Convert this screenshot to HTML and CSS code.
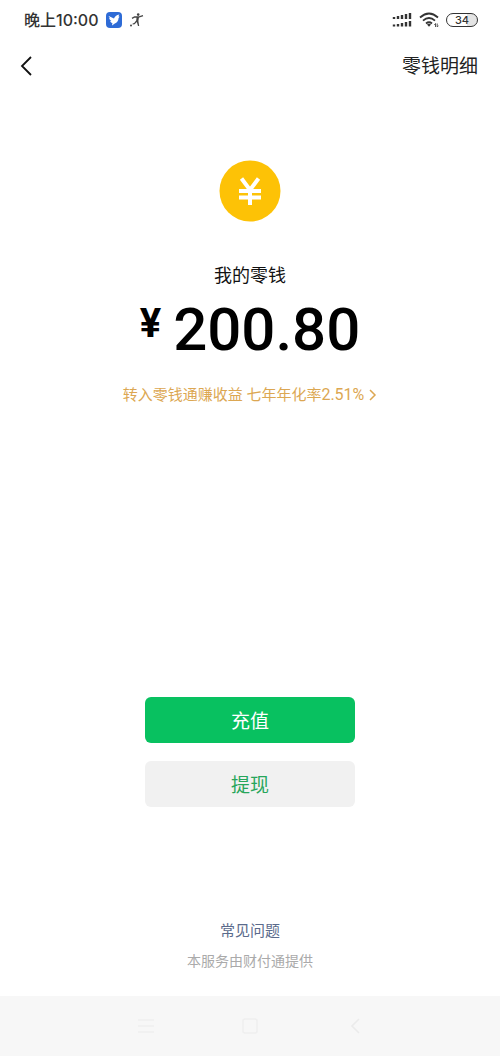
FILE: index.html
```html
<!DOCTYPE html>
<html lang="zh-CN">
<head>
<meta charset="utf-8">
<meta name="viewport" content="width=device-width, initial-scale=1">
<title>我的零钱</title>
<link rel="stylesheet" href="styles.css">
</head>
<body>
<div class="screen">
  <div class="status">
    <span class="clock">晚上10:00</span>
    <svg class="app-icon" width="16" height="16" viewBox="0 0 16 16" aria-hidden="true"><rect width="16" height="16" rx="4" fill="#2e6bd6"/><path d="M2.6 4 8 6.6C8.6 4.8 10.4 3 13.4 2.6L12.4 4.2 13.6 4.8 12.6 6C12.4 9 11 10.8 8.8 11.4L6 13.4 6.4 11C5 10.6 4.4 9.8 4.2 9L5.4 8.9C4 8.2 3.2 7 3.2 6L4.4 6.2C3.4 5.6 2.8 4.9 2.6 4Z" fill="#fff"/></svg>
    <svg class="app-icon" width="14" height="16" viewBox="0 0 14 16" aria-hidden="true"><circle cx="8.2" cy="2.6" r="1.3" fill="#444"/><path d="M2 6.4 4.6 5 8.5 5 13 3.6" fill="none" stroke="#444" stroke-width="1.3"/><path d="M6.6 5H9L8.4 9 9.2 14H8L6.8 10 4.6 12.2 2.6 12.6V11.6L4.2 11 6.2 8.4Z" fill="#444"/><circle cx="1" cy="13.4" r="1" fill="#444"/></svg>
    <span class="spacer"></span>
    <svg width="20" height="16" viewBox="0 0 20 16" aria-hidden="true"><path d="M2 5V7M6 4V7M10 3V7M14 2V7M18 1V7M2 12.5V14.5M6 12V14.5M10 11V14.5M14 10V14.5M18 9V14.5" stroke="#333" stroke-width="2.4"/></svg>
    <svg class="wifi" width="20" height="16" viewBox="0 0 20 16" aria-hidden="true"><path d="M1 5.5Q10-2.5 19 5.5M4 8.7Q10 3.4 16 8.7M7 11.5Q10 9 13 11.5" fill="none" stroke="#333" stroke-width="1.8"/><path d="M8 12.5Q10 11 12 12.5L10 14.8Z" fill="#333"/><path d="M16.5 15V11.5L15.3 12.8M18.2 11.5V15L19.4 13.7" fill="none" stroke="#555" stroke-width="1"/></svg>
    <span class="battery">34</span>
  </div>
  <header class="nav">
    <button class="back" aria-label="返回"><svg width="16" height="22" viewBox="0 0 16 22"><path d="M13 2 4 11 13 20" fill="none" stroke="#111" stroke-width="1.8"/></svg></button>
    <a class="detail" href="#">零钱明细</a>
  </header>
  <main class="main">
    <svg class="coin" width="62" height="62" viewBox="0 0 62 62" aria-hidden="true"><circle cx="31" cy="31" r="30.5" fill="#fdc206"/><path d="M22.5 18.5 31 30 39.5 18.5M31 29V45M20 31H42M20 37.5H42" fill="none" stroke="#fff" stroke-width="4"/></svg>
    <h1 class="title">我的零钱</h1>
    <p class="amount"><span class="yen">¥</span><span>200.80</span></p>
    <a class="promo" href="#"><span>转入零钱通赚收益 七年年化率<span class="rate">2.51%</span></span><svg width="8" height="14" viewBox="0 0 8 14" aria-hidden="true"><path d="M1 2 6 7 1 12" fill="none" stroke="#dca752" stroke-width="1.5"/></svg></a>
  </main>
  <div class="actions">
    <button class="btn primary">充值</button>
    <button class="btn plain">提现</button>
  </div>
  <footer class="foot">
    <a class="faq" href="#">常见问题</a>
    <p class="provider">本服务由财付通提供</p>
  </footer>
  <nav class="system">
    <button aria-label="最近任务"><svg width="18" height="18" viewBox="0 0 18 18"><path d="M1 3H17M1 9H17M1 15H17" stroke="#efefef" stroke-width="1.6"/></svg></button>
    <button aria-label="主屏幕"><svg width="18" height="18" viewBox="0 0 18 18"><rect x="2" y="2" width="14" height="14" rx="2" fill="none" stroke="#efefef" stroke-width="1.6"/></svg></button>
    <button aria-label="返回上一页"><svg width="18" height="18" viewBox="0 0 18 18"><path d="M14 2 7 9 14 16" fill="none" stroke="#ebebeb" stroke-width="1.6"/></svg></button>
  </nav>
</div>
</body>
</html>
```
FILE: styles.css
```css
* { box-sizing: border-box; }
body {
  margin: 0;
  background: #fff;
  color: #111;
  font-family: Roboto, "Noto Sans CJK SC", sans-serif;
}
h1, p { margin: 0; }
a { text-decoration: none; }
button {
  padding: 0;
  border: 0;
  background: none;
  font: inherit;
  cursor: pointer;
}
svg { display: block; flex: none; }
.screen { display: flex; flex-direction: column; min-height: 100vh; }
.status {
  display: flex;
  align-items: center;
  height: 40px;
  padding: 0 22px 0 24px;
  color: #333;
}
.clock { font: 500 16px/20px Inter, "Noto Sans CJK SC", sans-serif; }
.app-icon { margin-left: 8px; }
.spacer { flex: 1; }
.wifi { margin: 0 7px; }
.battery {
  width: 32px;
  border: 1px solid #333;
  border-radius: 8px;
  background: linear-gradient(90deg, #fff 66%, #e4e4e4 66%);
  font: 500 11px/12px Inter, sans-serif;
  text-align: center;
}
.nav {
  display: flex;
  align-items: center;
  justify-content: space-between;
  height: 52px;
  padding: 0 22px 0 18px;
}
.detail { padding-top: 2px; color: #222; font-size: 19px; line-height: 28px; }
.main { display: flex; flex-direction: column; align-items: center; padding-top: 68px; }
.title { margin-top: 40px; font-size: 18px; font-weight: 400; line-height: 28px; }
.amount {
  display: flex;
  align-items: flex-start;
  gap: 12px;
  margin-top: 4px;
  color: #000;
  font-size: 60px;
  font-weight: 500;
  line-height: 72px;
}
.yen { font-size: 40px; font-weight: 700; line-height: 60px; }
.promo {
  display: flex;
  align-items: center;
  gap: 5px;
  margin-top: 17px;
  color: #dca752;
  font-size: 15px;
  line-height: 24px;
}
.rate { font-size: 16px; }
.actions {
  display: flex;
  flex-direction: column;
  align-items: center;
  gap: 18px;
  margin-top: auto;
}
.btn { width: 42%; height: 46px; padding-bottom: 2px; border-radius: 6px; font-size: 19px; }
.primary { background: #08c160; color: #fff; }
.plain { background: #f1f1f1; color: #27a65b; }
.foot { padding: 112px 0 23px; text-align: center; }
.faq { display: block; color: #5b6b8c; font-size: 15px; line-height: 24px; }
.provider { margin-top: 6px; color: #aaa; font-size: 14px; line-height: 24px; }
.system {
  display: flex;
  align-items: center;
  justify-content: center;
  gap: 86px;
  height: 60px;
  background: #f7f7f7;
}
```
